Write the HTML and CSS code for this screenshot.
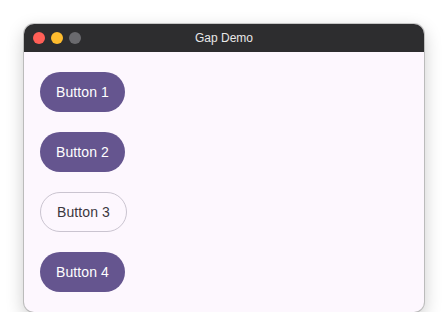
FILE: index.html
```html
<!DOCTYPE html>
<html lang="en">
<head>
  <meta charset="UTF-8" />
  <title>Gap Demo</title>
  <link rel="stylesheet" href="styles.css">
</head>
<body>
  <div class="window">
    <div class="titlebar">
      <div class="lights">
        <span class="light red"></span>
        <span class="light yellow"></span>
        <span class="light grey"></span>
      </div>
      <div class="title">Gap Demo</div>
    </div>
    <div class="content">
      <button class="btn filled">Button 1</button>
      <button class="btn filled">Button 2</button>
      <button class="btn outlined">Button 3</button>
      <button class="btn filled">Button 4</button>
    </div>
  </div>
</body>
</html>
```

FILE: styles.css
```css
body {
  margin: 0;
  background: #ffffff;
  font-family: "Liberation Sans", Arial, sans-serif;
}

.window {
  width: 400px;
  height: 288px;
  margin: 24px 0 0 24px;
  border-radius: 10px;
  overflow: hidden;
  background: #fdf7fe;
  box-shadow: 0 0 0 1px rgba(0, 0, 0, 0.18), 0 6px 18px rgba(0, 0, 0, 0.22);
  display: flex;
  flex-direction: column;
}

.titlebar {
  height: 28px;
  background: #2d2d2f;
  position: relative;
  display: flex;
  align-items: center;
  justify-content: center;
  flex-shrink: 0;
}

.lights {
  position: absolute;
  left: 9px;
  top: 8px;
  display: flex;
  gap: 6px;
}

.light {
  width: 12px;
  height: 12px;
  border-radius: 50%;
}

.red { background: #ff5f57; }
.yellow { background: #febc2e; }
.grey { background: #6a6a6e; }

.title {
  color: #e8e8e8;
  font-size: 12px;
}

.content {
  padding: 20px 16px;
  display: flex;
  flex-direction: column;
  align-items: flex-start;
  gap: 20px;
}

.btn {
  height: 40px;
  padding: 0 16px;
  border-radius: 20px;
  font-family: "Liberation Sans", Arial, sans-serif;
  font-size: 14px;
  letter-spacing: 0.1px;
  border: none;
}

.filled {
  background: #65558f;
  color: #ffffff;
}

.outlined {
  background: transparent;
  border: 1px solid #cac4d0;
  color: #3b383e;
}
```
